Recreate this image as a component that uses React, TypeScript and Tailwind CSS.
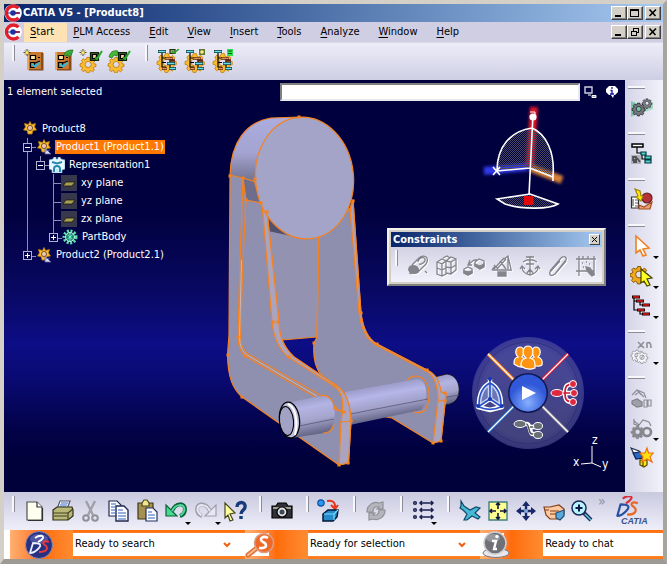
import type { ReactNode } from "react";

const FONT = "font-['DejaVu_Sans_Condensed','DejaVu_Sans',sans-serif]";

function AppLogo() {
  return (
    <svg viewBox="0 0 18 18" className="size-[18px] shrink-0" aria-hidden="true">
      <circle cx="9" cy="9" r="8.8" fill="#fff" />
      <path d="M14.5 4.2A7 7 0 1 0 14.5 13.8" fill="none" stroke="#e0202c" strokeWidth="3.4" />
      <path d="M8 9h8" stroke="#e0202c" strokeWidth="2" />
      <circle cx="9" cy="9" r="2.8" fill="#20309c" />
      <path d="M3 9h12" stroke="#20309c" strokeWidth="1" />
    </svg>
  );
}

function WinButton({ kind, label }: { kind: "min" | "max" | "restore" | "close"; label: string }) {
  return (
    <button
      aria-label={label}
      className={`flex h-3.5 w-4 items-center justify-center border border-t-white border-r-[#404040] border-b-[#404040] border-l-white bg-[#d4d0c8] shadow-[inset_-1px_-1px_0_#808080] ${kind === "close" ? "ml-0.5" : ""}`}
    >
      <svg viewBox="0 0 10 10" className="size-2.5" fill="none" stroke="#000" shapeRendering="crispEdges">
        {kind === "min" && <path d="M1 8h6" strokeWidth="2" />}
        {kind === "max" && <path d="M.5 1h8M.5 1v7.5h8V1M.5 2h8" />}
        {kind === "restore" && <path d="M3 1h5.500v4.500H6.500M3 1v2.500M3 1.500h5.500M1 4h5.500v4.500H1zM1 4.500h5.500" />}
        {kind === "close" && <path d="M1.500 1.500l6 6.500M8 1.500l-6.500 6.500" strokeWidth="1.600" shapeRendering="auto" />}
      </svg>
    </button>
  );
}

function WindowButtons({ second, name }: { second: "max" | "restore"; name: string }) {
  return (
    <div className="ml-auto flex pr-0.5">
      <WinButton kind="min" label={`Minimize ${name}`} />
      <WinButton kind={second} label={`Resize ${name}`} />
      <WinButton kind="close" label={`Close ${name}`} />
    </div>
  );
}

function Grip({ tall = true }: { tall?: boolean }) {
  return (
    <span
      className={
        tall
          ? "h-4 w-[3px] shrink-0 border-r border-[#8c8c98] bg-[#f8f8fc]"
          : "h-[3px] w-[17px] shrink-0 border-b border-[#8c8c98] bg-[#f8f8fc]"
      }
    />
  );
}

function Tool({ label, children, menu = false, wide = false }: { label: string; children: ReactNode; menu?: boolean; wide?: boolean }) {
  return (
    <button aria-label={label} className={`relative flex h-7 shrink-0 items-center justify-center ${wide ? "w-[30px]" : "w-7"}`}>
      <svg viewBox="0 0 24 24" className="size-6" fill="none" strokeWidth="1.2">
        {children}
      </svg>
      {menu && <span className="absolute right-0 bottom-0 border-x-[3px] border-t-[3px] border-x-transparent border-t-black" />}
    </button>
  );
}

const GEAR =
  "M10 2h4l.6 3 2 .9 2.700-1.700 2.500 2.700-1.600 2.600.7 1.800 2.600.7v3.500l-2.800.7-1 2 1.500 2.500-2.600 2.500-2.600-1.600-1.900.8-.7 2.500h-3.600l-.8-2.700-1.900-.9-2.600 1.600-2.400-2.600 1.500-2.500-.8-2-2.700-.7v-3.600l2.700-.7.900-1.900-1.500-2.500 2.500-2.500 2.500 1.500 2-.8zM12 8a4.500 4.500 0 1 0 0 9 4.500 4.500 0 0 0 0-9z";

function Gear({ x = 0, y = 0, s = 1, fill = "#f0b020", stroke = "#b87008" }: { x?: number; y?: number; s?: number; fill?: string; stroke?: string }) {
  return (
    <g transform={`translate(${x} ${y}) scale(${s})`}>
      <path d={GEAR} fill={fill} stroke={stroke} fillRule="evenodd" />
    </g>
  );
}

function Cabinet({ arrow = false }: { arrow?: boolean }) {
  return (
    <>
      <path d="M4 3h16v18H4z" fill="#c87830" />
      <path d="M4 3h2v18H4z" fill="#e8a860" />
      <path d="M18 4h2.500v17.500H6V20h12z" fill="#8c4c18" />
      <path d="M7.500 6.500h5v4h-5z" fill="#ffe8a0" stroke="#000" />
      <path d="M15 8.500h2M7.500 13.500h4v5h-4zM12 14l5-2" stroke="#000" />
      <path d="M9 15l3 2.500 5-4" stroke="#38b8d8" strokeWidth="2" />
      {arrow ? (
        <path d="M13 5c2-3 4-4 9-4-1 3-1 5-4 7l-1-2-3 1z" fill="#3ca838" stroke="#14701c" strokeWidth=".7" />
      ) : (
        <Spark />
      )}
    </>
  );
}

function Spark() {
  return (
    <>
      <path d="M4 0v7M.5 3.500h7M2 1.500l4 4M6 1.500l-4 4" stroke="#403000" strokeWidth=".9" />
      <circle cx="4" cy="3.500" r="1.600" fill="#ffee60" />
    </>
  );
}

function GearCheck({ arrow = false }: { arrow?: boolean }) {
  return (
    <>
      <Gear x={1} y={7} s={0.68} fill="#f8bc30" stroke="#c07808" />
      <path d="M11.500 3.500h8v8h-8z" fill="#385828" stroke="#102008" />
      <path d="M13.500 5.500h4v4h-4z" fill="#ffd8a0" stroke="#000" />
      <path d="M16 8l2 2 5-8" stroke="#28a830" strokeWidth="2" />
      {arrow ? <path d="M2 8C3 3 6 1 11 2l-1 5-3-1-2 3z" fill="#48b838" stroke="#187018" strokeWidth=".7" /> : <Spark />}
    </>
  );
}

function GearTree({ badge }: { badge: ReactNode }) {
  return (
    <>
      <Gear x={1} y={3} s={0.82} fill="#f8bc30" stroke="#d08c10" />
      <path d="M6 4v14h4M6 9h4M6 13.500h4M14 10v9" stroke="#000" />
      <path d="M2 2.500h8M11 14.500h8M13 19.500h7" stroke="#103840" strokeWidth="3" />
      <path d="M2.500 2.500H9.500M11.500 14.500h7M13.500 19.500h6" stroke="#68e0e8" strokeWidth="1.500" />
      <path d="M9 9.500h8M14 11.500h5M6 19.500h5" stroke="#602818" strokeWidth="2.400" />
      <path d="M9.500 9.500h7M6.500 19.500h4" stroke="#e09060" strokeWidth="1.200" />
      {badge}
    </>
  );
}

function TopToolbar() {
  return (
    <div className="flex h-[37px] items-start bg-linear-to-b from-[#ededf8] to-[#cfcfe4] pt-0.5 pl-2" role="toolbar" aria-label="Product tools">
      <Grip />
      <div className="ml-1.5 flex pt-0.5">
        <Tool label="New catalog"><Cabinet /></Tool>
        <Tool label="Open catalog"><Cabinet arrow /></Tool>
        <Tool label="New check"><GearCheck /></Tool>
        <Tool label="Open check"><GearCheck arrow /></Tool>
      </div>
      <div className="ml-3 flex">
        <Grip />
        <div className="ml-1.5 flex pt-0.5">
          <Tool label="Validate structure"><GearTree badge={<><path d="M14 .5h5v4h-5z" fill="#98a870" stroke="#203010" /><path d="M16 2l2 2 5-4" stroke="#30a030" strokeWidth="1.600" /></>} /></Tool>
          <Tool label="Structure options"><GearTree badge={<><path d="M15 0h6v6h-6z" fill="#607830" /><circle cx="18" cy="3" r="1.800" fill="#fff080" /></>} /></Tool>
          <Tool label="Structure list"><GearTree badge={<><path d="M15 0h6v7h-6z" fill="#30e050" /><path d="M16 2h4M16 4.500h4" stroke="#086018" /></>} /></Tool>
        </div>
      </div>
    </div>
  );
}

function MenuBar() {
  const items = ["Start", "PLM Access", "Edit", "View", "Insert", "Tools", "Analyze", "Window", "Help"];
  return (
    <nav className="flex h-[21px] items-center border-b border-[#dcdce8] bg-[#cfcee2]">
      <AppLogo />
      <div className="ml-0.5 flex">
        {items.map((item) => (
          <button key={item} className={`h-[19px] pr-[13px] pl-1.5 whitespace-nowrap ${item === "Start" ? "bg-[#ffe2b4]" : ""}`}>
            <span className="underline underline-offset-2">{item[0]}</span>
            {item.slice(1)}
          </button>
        ))}
      </div>
      <WindowButtons second="restore" name="document" />
    </nav>
  );
}

/* Specification tree */

function Expander({ open }: { open: boolean }) {
  return (
    <button aria-label={open ? "Collapse" : "Expand"} className="flex size-[9px] shrink-0 items-center justify-center border border-[#b0b0d0] bg-[#000048]">
      <svg viewBox="0 0 7 7" className="size-[7px]" stroke="#fff" shapeRendering="crispEdges">
        <path d={open ? "M1 3.500h5" : "M1 3.500h5M3.500 1v5"} />
      </svg>
    </button>
  );
}

function TreeIcon({ kind }: { kind: "root" | "product" | "rep" | "plane" | "body" }) {
  return (
    <svg viewBox="0 0 16 16" className="size-4 shrink-0" aria-hidden="true">
      {(kind === "root" || kind === "product") && (
        <>
          <path d="M8 .5l1.500 3 4-1-1 3.500 2 3-3.500.5L10 13H6l-1-3.500L1.500 9l2-3-1-3.500 4 1z" fill="#f8c030" stroke="#b87808" strokeWidth=".8" />
          <circle cx="8" cy="7" r="2.600" fill="#f0c0b0" stroke="#604010" strokeWidth=".8" />
        </>
      )}
      {kind === "product" && <path d="M9 9l6 6H9zM9 12l5-1" fill="#d8d8f8" stroke="#6060b0" strokeWidth=".8" />}
      {kind === "rep" && (
        <>
          <path d="M0 3l4-1 1-2h2v2h2V0h2l1 2 4 1v9l-3 1v3H3v-3l-3-1z" fill="#e8f8ff" stroke="#78b0d0" strokeWidth=".7" />
          <path d="M3 5l5 1.500L13 5M5 15v-3c0-4 6-4 6 0v3" fill="none" stroke="#2888b0" strokeWidth="2" />
          <path d="M6.500 12h3v4h-3z" fill="#b8e8f8" />
        </>
      )}
      {kind === "plane" && (
        <>
          <path d="M0 0h16v16H0z" fill="#38384c" />
          <path d="M5 7h9l-3 4H2z" fill="#a8a050" stroke="#181810" strokeWidth=".8" />
        </>
      )}
      {kind === "body" && (
        <>
          <circle cx="8" cy="8" r="6" fill="none" stroke="#60e0b0" strokeWidth="3" strokeDasharray="2 1.500" />
          <circle cx="8" cy="8" r="4.500" fill="#208070" stroke="#b0ffe0" />
          <path d="M8 4v8M5.500 6l5 4M10.500 6l-5 4" stroke="#70f0c0" />
        </>
      )}
    </svg>
  );
}

function SpecTree() {
  const rows: { text: string; pad: string; icon: "root" | "product" | "rep" | "plane" | "body"; open?: boolean; selected?: boolean }[] = [
    { text: "Product8", pad: "pl-0", icon: "root" },
    { text: "Product1 (Product1.1)", pad: "pl-0", icon: "product", open: true, selected: true },
    { text: "Representation1", pad: "pl-[13px]", icon: "rep", open: true },
    { text: "xy plane", pad: "pl-[39px]", icon: "plane" },
    { text: "yz plane", pad: "pl-[39px]", icon: "plane" },
    { text: "zx plane", pad: "pl-[39px]", icon: "plane" },
    { text: "PartBody", pad: "pl-[26px]", icon: "body", open: false },
    { text: "Product2 (Product2.1)", pad: "pl-0", icon: "product", open: false },
  ];
  return (
    <div className="relative mt-4 ml-[18px] w-max text-white">
      <svg viewBox="0 0 60 146" className="absolute top-0 left-0 h-[146px] w-[60px]" stroke="#8c8cb8" fill="none" shapeRendering="crispEdges">
        <path d="M5.500 18v118M9 27.500h5M9 136.500h5M18.500 36v5M22 45.500h5M31.500 54v60M31.500 63.500h8M31.500 82.500h8M31.500 100.500h8M35 118.500h5" />
      </svg>
      <ul className="relative">
        {rows.map((r) => (
          <li key={r.text} className={`flex h-[18px] items-center ${r.pad}`}>
            {r.open !== undefined && <span className="mr-1 flex pl-px"><Expander open={r.open} /></span>}
            <TreeIcon kind={r.icon} />
            <span className={`ml-[3px] px-px leading-[14px] whitespace-nowrap ${r.selected ? "bg-[#ff7800]" : ""}`}>{r.text}</span>
          </li>
        ))}
      </ul>
    </div>
  );
}

/* 3D part shown in the canvas */

function Model() {
  return (
    <svg viewBox="0 0 250 370" className="absolute top-[30px] left-[216px] h-[370px] w-[250px]" role="img" aria-label="Bracket with pin">
      <defs>
        <linearGradient id="rim" x1="0" y1="0" x2="0" y2="1">
          <stop offset="0" stopColor="#acacde" />
          <stop offset=".55" stopColor="#a4a4d2" />
          <stop offset="1" stopColor="#70708e" />
        </linearGradient>
        <linearGradient id="pin" x1="0" y1="0" x2=".2" y2="1">
          <stop offset="0" stopColor="#8c8cb4" />
          <stop offset=".35" stopColor="#b4b4e4" />
          <stop offset=".65" stopColor="#a4a4cc" />
          <stop offset="1" stopColor="#606080" />
        </linearGradient>
        <linearGradient id="pinLong" gradientUnits="userSpaceOnUse" x1="380" y1="381" x2="387" y2="420">
          <stop offset="0" stopColor="#9090bc" />
          <stop offset=".35" stopColor="#b6b6e8" />
          <stop offset=".65" stopColor="#a0a0c8" />
          <stop offset="1" stopColor="#5c5c7c" />
        </linearGradient>
      </defs>
      <g transform="translate(-220 -110)" stroke="#f58220" strokeWidth="1.200" strokeLinejoin="round">
        {/* rear web between the arms */}
        <path d="M265 205L319 232L317 337L282 340L274 318Z" fill="#9393b1" stroke="none" />
        <path d="M317 337L282 340" />
        <path d="M267 213L296 237L268 231Z" fill="#52526c" stroke="none" />
        {/* pin, far end */}
        <path d="M430 378L447 374C456 375 460 384 459 392C458 400 454 404 445 405L436 407Z" fill="url(#pin)" stroke="#101020" strokeWidth=".8" />
        <path d="M437 399L459 395" stroke="#505070" strokeWidth=".8" />
        {/* right arm */}
        <path d="M353 200L361 313C363 329 368 339 377 344L427 370C438 376 440 386 441 392L446 394L441 441L433 443L392 418L345 410L321 375C314 366 313 355 314 343L317 337L319 236L350 208Z" fill="#8e8eae" />
        <path d="M350 210L359 312C361 329 367 340 376 345L426 371C435 376 438 386 438 400L433 443L441 441L446 394L441 392C440 382 436 374 427 370L377 344C368 339 363 329 361 313L353 200Z" fill="#a9a3bf" />
        <path d="M317 337L318.500 236M438 401L445 400" />
        {/* pin, middle */}
        <path d="M345 392L417 379C427 378 430 400 421 410L345 426Z" fill="url(#pinLong)" stroke="none" />
        <path d="M345 415L428 399" stroke="#58587a" strokeWidth=".8" />
        <path d="M407 381C411 374 421 375 425 381C431 389 430 402 425 410C422 413 418 413 414 412" fill="none" />
        {/* left arm */}
        <path d="M230 175L229 335L227.500 355C228 378 233 389 242 397L339 465L348.500 463L351 421C350 402 346 393 337 386L294 357C283 347 279 335 279 322L267 212L254 178Z" fill="#8f8faf" />
        <path d="M262 203L272 322C274 340 280 350 288 357L334 386C342 392 345 401 341 422L339 465L348.500 463L351 421C350 402 346 393 337 386L294 357C283 347 279 335 279 322L267 212Z" fill="#aaa4c0" />
        <path d="M243 178L240 260L238 337C238 347 240 352 245 356L315 397M243 178L246 200L243 260L240.500 337C241 346 243 350 248 354L320 395" fill="none" />
        <path d="M241.500 260L239.500 337C240 347 242 351 247 355L317 396" fill="none" stroke="#e8c8b0" strokeWidth=".7" />
        <path d="M341 422L351 421M334 407L344 413M335 410L345 412" />
        {/* head */}
        <path d="M243 178L254 180L261 203L246 200Z" fill="#6e6e8c" />
        <path d="M230 175C231 142 246 122 271 118L300 117L256 182L243 178Z" fill="url(#rim)" />
        <ellipse cx="304.500" cy="178" rx="49" ry="61" transform="rotate(-6 304.500 178)" fill="#a4a4c8" />
        {/* pin, near end */}
        <path d="M291 402L325 395C334 400 338 414 332 427C330 431 328 432 324 433L292 438Z" fill="url(#pin)" stroke="none" />
        <path d="M294 427L334 419" stroke="#58587a" strokeWidth=".8" />
        <path d="M320 396C329 393 334 402 334.500 408M334 424C332 432 328 433 323 433" fill="none" />
        <ellipse cx="289.500" cy="420" rx="10" ry="18" transform="rotate(-6 289.500 420)" fill="#c0c0dc" stroke="#000" strokeWidth="1.300" />
        <path d="M288 404C296 407 298 423 295 435" fill="none" stroke="#fff" strokeWidth="2" />
        <ellipse cx="286.500" cy="421" rx="7" ry="14.500" transform="rotate(-6 286.500 421)" fill="#a2a2c6" stroke="#000" strokeWidth="1.100" />
        {/* vertex handles */}
        <path d="M230 176h.1M243 178h.1M255 179h.1M261 203h.1M267 212h.1M246 200h.1M350 210h.1M353 201h.1M238 337h.1M228 355h.1M245 356h.1M242 397h.1M273 322h.1M278 322h.1M289 357h.1M335 386h.1M361 313h.1M377 344h.1M427 370h.1M445 393h.1M445 401h.1M441 441h.1M433 443h.1M339 465h.1M348 463h.1M351 421h.1M344 412h.1M335 408h.1M314 343h.1M299 117h.1" strokeWidth="3" strokeLinecap="square" />
      </g>
    </svg>
  );
}

function OrientationCompass() {
  return (
    <svg viewBox="0 0 88 108" className="absolute top-6 right-[57px] h-[108px] w-[88px]" role="img" aria-label="Compass">
      <defs>
        <filter id="glow" x="-50%" y="-50%" width="200%" height="200%"><feGaussianBlur stdDeviation="1.800" /></filter>
        <pattern id="mesh" width="2" height="2" patternUnits="userSpaceOnUse"><path d="M0 0h1v1H0zM1 1h1v1H1z" fill="#484860" /></pattern>
      </defs>
      <g filter="url(#glow)" strokeWidth="8">
        <path d="M54 3L50 62" stroke="#e01828" />
        <path d="M4 67L47 63" stroke="#3038e8" />
        <path d="M51 64L82 76" stroke="#d88038" />
      </g>
      <path d="M16 67C16 42 30 27 52 24C66 30 75 48 73 73L49 64Z" fill="url(#mesh)" />
      <g fill="none" stroke="#fff" strokeWidth="1.600">
        <path d="M17 67C17 42 31 27 52 24C66 30 75 48 73 72M13 63l7 8M20 63l-7 8M17 67l33-3 23 9M73 70v7M53 10L49 91" />
        <path d="M17 95L50 90L78 100C70 105 43 106 25 100Z" fill="url(#mesh)" />
      </g>
      <path d="M50 8h5v4" fill="none" stroke="#fff" />
      <circle cx="53" cy="13" r="3.600" fill="#fff" />
      <path d="M44 92h9v9h-9z" fill="#e00808" />
    </svg>
  );
}

function CommandWheel() {
  return (
    <svg viewBox="0 0 114 114" className="absolute top-[256px] right-10 size-[114px]" role="img" aria-label="Command wheel">
      <defs>
        <radialGradient id="wheel">
          <stop offset=".3" stopColor="#8080b4" stopOpacity=".5" />
          <stop offset=".8" stopColor="#7878ac" stopOpacity=".55" />
          <stop offset="1" stopColor="#5454a0" stopOpacity=".6" />
        </radialGradient>
        <radialGradient id="hub" cy=".75">
          <stop offset="0" stopColor="#88b0ff" />
          <stop offset="1" stopColor="#3058d8" />
        </radialGradient>
      </defs>
      <circle cx="57" cy="57" r="56" fill="url(#wheel)" />
      <circle cx="57" cy="57" r="51" fill="none" stroke="#20205c" strokeOpacity=".4" />
      <path d="M17 18L43 44" stroke="#f07818" strokeWidth="3.400" />
      <path d="M97 18L71 44" stroke="#d81838" strokeWidth="3.400" />
      <path d="M17 96L43 70" stroke="#2060b8" strokeWidth="3.400" />
      <path d="M97 96L71 70" stroke="#888890" strokeWidth="3" />
      <path d="M17 18L43 44M97 18L71 44M17 96L43 70M97 96L71 70" stroke="#fff" strokeWidth="1.300" />
      <circle cx="57" cy="57" r="20" fill="#101850" />
      <circle cx="57" cy="57" r="18.500" fill="url(#hub)" />
      <path d="M51 50l14 7-14 7z" fill="#fff" />
      <g fill="#ff9410" stroke="#fff" strokeWidth="1.200">
        <path d="M43 28c0-5 1-6 4-7-4-4-2-10 2-10s5 6 2 10c2 1 3 2 3 6v3c-3 2-7 1-11-2zM60 28c0-5 1-6 3-7-3-4-2-10 2-10s6 6 2 10c3 1 5 3 4 8-3 2-6 2-11-1z" />
        <path d="M50 30c0-5 1-7 5-8-5-4-3-12 2-12s7 8 2 12c4 1 5 3 5 8v2c-5 2-9 2-14-2z" />
      </g>
      <g fill="none" stroke="#fff" strokeWidth="4.500">
        <path d="M87 57h15M94 57c0-7 2-9 8-9M94 57c0 7 2 9 8 9" />
        <path d="M49 88h7c4 0 2 10 6 10h6M60 91h7" />
      </g>
      <g fill="none" stroke="#d01830" strokeWidth="1.700">
        <path d="M88 57h14M94 57c0-7 2-9 8-9M94 57c0 7 2 9 8 9" />
      </g>
      <g fill="#e02840" stroke="#fff">
        <ellipse cx="86" cy="57" rx="6" ry="3.500" /><circle cx="102" cy="48" r="3.500" /><circle cx="103" cy="57" r="3.500" /><circle cx="102" cy="66" r="3.500" />
      </g>
      <path d="M48 88h7c4 0 2 10 6 10h6M59 91h7" stroke="#50585c" strokeWidth="1.500" fill="none" />
      <g fill="#687074" stroke="#fff">
        <ellipse cx="49" cy="88" rx="6" ry="3.500" /><ellipse cx="67" cy="90" rx="4.500" ry="3.500" /><ellipse cx="67" cy="99" rx="4.500" ry="3.500" />
      </g>
      <path d="M19 43v20L7 71l12 3 12-3-12-8M19 47C11 51 8 59 8 69M19 47c8 4 11 12 11 22" fill="none" stroke="#fff" strokeWidth="4.500" strokeLinejoin="round" />
      <path d="M19 47C11 51 8 59 8 69L19 63L30 69C30 59 27 51 19 47Z" fill="#90a8e0" fillOpacity=".5" />
      <path d="M19 43v20L7 71M19 63l12 8M19 47C11 51 8 59 8 69M19 47c8 4 11 12 11 22M8 71c7 3 15 3 22 0" fill="none" stroke="#2850c8" strokeWidth="1.600" />
      <g fill="#1838b0"><circle cx="19" cy="43" r="2" /><circle cx="7" cy="70" r="2" /><circle cx="31" cy="70" r="2" /><circle cx="19" cy="63" r="2" /></g>
    </svg>
  );
}

function AxisTriad() {
  return (
    <svg viewBox="0 0 38 48" className="absolute top-[350px] right-[14px] h-12 w-[38px]" role="img" aria-label="Axis system">
      <path d="M19 33V16M19 33L8 34M19 33l9 4" stroke="#fff" fill="none" />
      <g fill="#fff" fontSize="12" fontFamily="DejaVu Sans Condensed, sans-serif">
        <text x="19" y="14">z</text><text x="0" y="36">x</text><text x="29" y="38">y</text>
      </g>
    </svg>
  );
}

function GreyTool({ label, d, fill }: { label: string; d: string; fill?: string }) {
  return (
    <Tool label={label}>
      <g transform="translate(1 1)" stroke="#fff"><path d={d} />{fill && <path d={fill} fill="#fff" />}</g>
      <g stroke="#84848c" strokeWidth="1.300"><path d={d} />{fill && <path d={fill} fill="#84848c" />}</g>
    </Tool>
  );
}

function ConstraintsPalette() {
  return (
    <section aria-label="Constraints" className="absolute top-[148px] right-[19px] w-[219px] border-2 border-t-[#f4f2ec] border-r-[#84827c] border-b-[#84827c] border-l-[#f4f2ec] bg-[#d4d0c8] p-0.5">
      <header className="flex h-[15px] items-center justify-between bg-linear-to-r from-[#0a246a] to-[#a6caf0] px-0.5">
        <h2 className="font-bold text-white">Constraints</h2>
        <button aria-label="Close Constraints" className="flex size-[11px] items-center justify-center border border-t-white border-r-[#404040] border-b-[#404040] border-l-white bg-[#d4d0c8]">
          <svg viewBox="0 0 7 7" className="size-[7px]" stroke="#000"><path d="M1 1l5 5M6 1L1 6" /></svg>
        </button>
      </header>
      <div className="flex h-[35px] bg-linear-to-b from-[#d2d2e4] to-[#f2f2fc] pt-[3px] pl-1">
        <Grip />
        <div className="ml-1.5 flex pt-0.5">
          <GreyTool label="Coincidence" d="M6 11L13 4c3-3 7-2 8 0s0 6-3 8l-6 6M12 8c0-4 6-6 7-3s-4 6-6 5M19 17l2 2M3 19l3 1" fill="M3 14c1-3 6-3 8-1s2 5 0 6-6 0-7-1-2-2-1-4z" />
          <GreyTool label="Contact" d="M3 8l5-3 4 2v13l-4 2-5-2zM3 8l5 2v12M8 10l4-3M12 7l5-4 5 2v11l-5 4-5-1M12 7l5 1v12M17 8l5-3M3 14l5 2 4-2M12 13l5 1 5-3M9 4l4-2 3 2" />
          <GreyTool label="Offset" d="M7 10l5-4M8 6l-2 5 4 0M12 6h3M2 15l4-2 4 2v4l-4 2-4-2zM13 8l4-3 5 2v5l-4 3-5-3z" fill="M2 17l4 1 4-1v2l-4 2-4-2zM13 10l5 2 4-2v3l-4 2-5-3z" />
          <GreyTool label="Angle" d="M2 16h20M4 15L14 4M7 15l9-10M4 11l3 3M10 7l6 8M18 3v12M14 5l4-3 3 13M2 16l3-4" fill="M8 18h8v4H8z" />
          <GreyTool label="Fix" d="M12 2v18M8 3h8M5 8l4-2h6l4 2M8 10h8M4 13c0 5 4 7 8 8 4-1 8-3 8-8M2 15l2-3 3 3M17 15l3-3 2 3M9 19l3-4 3 4" />
          <GreyTool label="Fix together" d="M4 17L15 4c4-3 6 0 5 2L9 20c-4 3-6 1-5-2L14 7M9 20l11-13" />
          <GreyTool label="Quick constraint" d="M2 5h20M5 2v20M2 17h18M20 2v20M9 2v3M14 2v3M8 9h1M12 8h1M15 10h1M9 13h1" fill="M12 13l4 1 4 6-2 2-5-5z" />
        </div>
      </div>
    </section>
  );
}

function Viewport() {
  return (
    <main className="relative min-h-[411px] min-w-0 flex-1 overflow-hidden bg-[linear-gradient(to_bottom,#00003e_0%,#00003e_32%,#080860_50%,#0d0d86_64%,#0a0a74_72%,#020248_85%,#00003a_92%)]">
      <div className="relative z-10 flex h-6 items-center pr-1.5 pl-[3px] text-white">
        <label htmlFor="power" className="flex-1 whitespace-nowrap">1 element selected</label>
        <input id="power" className="h-[18px] w-[300px] border-2 border-t-[#808080] border-r-[#e8e8f0] border-b-[#e8e8f0] border-l-[#808080] bg-white px-1 text-black outline-none" />
        <svg viewBox="0 0 14 14" className="ml-1 size-3.5" aria-hidden="true">
          <path d="M1 2h7v6H1z" fill="#000040" stroke="#d0d0e0" strokeWidth="1.400" /><path d="M4 10h3M8 10.500h4v2H8z" stroke="#fff" fill="#a0a0b0" />
        </svg>
        <svg viewBox="0 0 14 14" className="ml-[7px] size-3.5" aria-hidden="true">
          <path d="M4 1h6l3 3v3l-3 3H9l-1 3-2-3H4L1 7V4z" fill="#fff" /><path d="M7 2v2M7 5v4M5.500 5.500H7M5 9h4" stroke="#1010a0" strokeWidth="1.300" />
        </svg>
      </div>
      <Model />
      <SpecTree />
      <OrientationCompass />
      <CommandWheel />
      <AxisTriad />
      <ConstraintsPalette />
    </main>
  );
}

function RailTool({ label, menu = false, children }: { label: string; menu?: boolean; children: ReactNode }) {
  return (
    <button aria-label={label} className="relative flex h-[30px] w-[34px] items-center justify-center">
      <svg viewBox="0 0 24 24" className="size-6" fill="none" strokeWidth="1.200">{children}</svg>
      {menu && <span className="absolute right-0 bottom-0.5 border-x-[3px] border-t-[3px] border-x-transparent border-t-black" />}
    </button>
  );
}

function RailGroup({ children }: { children: ReactNode }) {
  return (
    <div className="flex flex-col pt-1.5 pb-[3px]">
      <div className="mb-1 flex pl-[3px]"><Grip tall={false} /></div>
      {children}
    </div>
  );
}

function Rail() {
  return (
    <aside className="w-[38px] shrink-0 bg-linear-to-r from-[#d4d4e8] to-[#f2f2fa]">
      <RailGroup>
        <RailTool label="Assembly workbench">
          <path d="M1 5l16 7L1 21z" fill="#78c8b0" /><path d="M12 12l11-6v7l-11 4z" fill="#a8d8c8" />
          <Gear x={2} y={6} s={0.56} fill="#787880" stroke="#101010" /><Gear x={12} y={2} s={0.42} fill="#808088" stroke="#101010" />
        </RailTool>
      </RailGroup>
      <RailGroup>
        <RailTool label="Structure">
          <path d="M7 5v6h5M12 11v6h4" stroke="#000" /><path d="M2 2h11v3H2z" fill="#fff" stroke="#000" strokeWidth="1.500" />
          <path d="M11 10h5v3h-5zM15 14h6v3h-6zM15 18h6v3h-6z" fill="#50d0d0" stroke="#003838" />
          <path d="M1 13h10v9H1z" fill="#b4b4b8" /><path d="M3 15h3v3H3zM7 16l3 4M3 20h4" stroke="#505058" strokeWidth="1.800" />
        </RailTool>
      </RailGroup>
      <RailGroup>
        <RailTool label="Reuse pattern">
          <path d="M1.500 9h7v11h-7z" fill="#fff" stroke="#303030" /><path d="M3 11v7M5 12h3M5 15h3M5 18h3" stroke="#606060" />
          <circle cx="17" cy="10" r="5" fill="#b83038" stroke="#602028" /><path d="M9 17l5 2 8-5-2 7H9z" fill="#f0a070" stroke="#a05020" />
          <path d="M5 1l5 2 1 5h2l-2 5-5-4 2-1z" fill="#ffe818" stroke="#a08800" />
        </RailTool>
      </RailGroup>
      <RailGroup>
        <RailTool label="Select" menu><path d="M6 2v17l4-3 3 6 3-1-3-6 6-1z" fill="#fff" stroke="#f08020" strokeWidth="1.600" /></RailTool>
        <RailTool label="Select component" menu><Gear x={0} y={1} s={0.76} fill="#f0a818" stroke="#805000" /><path d="M11 5v14l3-2 3 5 3-1-3-6 5-1z" fill="#ffff20" stroke="#404000" /></RailTool>
        <RailTool label="Tree selection" menu>
          <path d="M4 3v13h4M4 7h6M10 7v4h3M10 16v4h3" stroke="#000" /><path d="M2 3h8M6 7h8M12 11h8M7 16h8M12 20h8" stroke="#200000" strokeWidth="3" /><path d="M3 3h6M7 7h6M13 11h6M8 16h6M13 20h6" stroke="#e01818" strokeWidth="1.600" />
        </RailTool>
      </RailGroup>
      <RailGroup>
        <RailTool label="Multi instance" menu>
          <path d="M8 2l6 6M14 2L8 8M17 8V3c3-1 4 0 4 5" stroke="#909098" strokeWidth="1.600" />
          <Gear x={1} y={9} s={0.5} fill="#f8f8fc" stroke="#707078" /><Gear x={6} y={11} s={0.5} fill="#f8f8fc" stroke="#707078" />
        </RailTool>
      </RailGroup>
      <RailGroup>
        <RailTool label="Manipulation">
          <path d="M2 9l5-5 7 3 2 5M5 9l4-3 5 5M7 4l4 5M14 14h3v7h-3zM18 14h3v6h-3z" stroke="#909098" /><path d="M2 15l5-2 5 3v4l-5 1-5-3z" fill="#a0a0a8" stroke="#808088" />
        </RailTool>
        <RailTool label="Snap" menu>
          <Gear x={1} y={9} s={0.55} fill="#88888e" stroke="#88888e" /><circle cx="17" cy="16" r="4" stroke="#85858c" strokeWidth="2.600" /><path d="M4 5l5 4 4-5 6 2 2 4M4 3v5l5 2" stroke="#88888e" />
        </RailTool>
        <RailTool label="Smart move">
          <path d="M1 2l8 3 3 5-6 2z" fill="#fff" stroke="#203050" /><path d="M3 7l7-1 3 6-7 1z" fill="#2868c8" stroke="#102048" />
          <path d="M10 14h7v5l-3 2-4-2zM13 14v7" fill="#ffe818" stroke="#504800" />
          <path d="M17 2l1.500 5 4.500 0-3 4 2 5-5-3-5 3 1-5-3-4h5z" fill="#ffe010" stroke="#f07010" />
        </RailTool>
      </RailGroup>
    </aside>
  );
}

function Group({ children }: { children: ReactNode }) {
  return (
    <div className="flex items-start pl-2">
      <Grip />
      <div className="ml-1.5 flex pt-px pr-0.5">{children}</div>
    </div>
  );
}

function DassaultMark({ light = false }: { light?: boolean }) {
  return (
    <g fill="none" strokeWidth={light ? 1.8 : 2} strokeLinejoin="round">
      <path d="M9 4c4-3 9-3 8 0-1 2-3 3-5 4" stroke={light ? "#fff" : "#d83040"} />
      <path d="M4 19L7 9c8 0 9 2 5 6-2 2-5 4-8 4z" stroke={light ? "#e8f0ff" : "#2850a0"} />
      <path d="M23 8c-5-2-8 1-4 3 4 3 2 7-6 7" stroke={light ? "#f03838" : "#e86828"} />
    </g>
  );
}

function BottomToolbar() {
  return (
    <div className="flex h-[38px] items-start bg-linear-to-b from-[#c9c9df] to-[#efeffa] pt-1" role="toolbar" aria-label="Standard tools">
      <Group>
        <Tool label="New"><path d="M4 3h10l5 5v13H4z" fill="#fffff0" stroke="#505050" /><path d="M14 3v5h5" fill="#fff" stroke="#303030" /><path d="M5 21.500h14.500V9" stroke="#303030" /></Tool>
        <Tool label="Print">
          <path d="M9 2h10l-3 8H6z" fill="#fff" stroke="#505868" /><path d="M10 4h7M9 6h7M8 8h7" stroke="#3868d0" />
          <path d="M2 11l4-3h15l1 3v6l-5 4H2z" fill="#b8b878" stroke="#303018" /><path d="M2 14h15l5-4M17 14v7M3 17h13" stroke="#404020" />
        </Tool>
        <Tool label="Cut"><path d="M7 2l7 14M16 2L9 16" stroke="#a0a0a8" strokeWidth="2.400" /><circle cx="7" cy="19" r="2.800" stroke="#909098" strokeWidth="2" /><circle cx="16" cy="19" r="2.800" stroke="#909098" strokeWidth="2" /></Tool>
        <Tool label="Copy"><path d="M2 2h8l4 4v11H2z" fill="#fff" stroke="#202850" /><path d="M9 7h8l4 4v11H9z" fill="#fff" stroke="#202850" strokeWidth="1.400" /><path d="M4 5h5M4 8h4M4 11h4M4 14h4M11 11h5M11 14h8M11 17h8M11 20h8" stroke="#3060c0" /></Tool>
        <Tool label="Paste"><path d="M3 4h15v16H3z" fill="#a49050" stroke="#403818" /><path d="M7 4l2-3h3l2 3v3H7z" fill="#f0e890" stroke="#504818" /><path d="M11 9h7l4 4v9H11z" fill="#fff" stroke="#203060" /><path d="M13 13h4M13 16h7M13 19h7" stroke="#3060c0" /></Tool>
        <Tool label="Undo" menu wide><path d="M8 12C12 3 21 4 21 10c0 3-2 6-5 7" stroke="#086038" strokeWidth="4" /><path d="M2 6v11h11z" fill="#48d890" stroke="#086038" /><path d="M8 12C12 4 20 5 20.500 10c0 3-2 5-4 6.500" stroke="#50d898" strokeWidth="2" /></Tool>
        <Tool label="Redo" menu wide><path d="M16 12C12 3 3 4 3 10c0 3 2 6 5 7" stroke="#a0a0ac" strokeWidth="4" /><path d="M22 6v11H11z" fill="#e8e8f4" stroke="#a0a0ac" /><path d="M16 12C12 4 4 5 3.500 10c0 3 2 5 4 6.500" stroke="#e8e8f4" strokeWidth="2" /></Tool>
        <Tool label="What's this?"><path d="M2 4v15l3-3 2 6 3-1-3-6 5-1z" fill="#ffffa0" stroke="#484820" /><path d="M14 8c0-6 9-6 8 0 0 3-4 3-4 7M18 17v3" stroke="#183c78" strokeWidth="3.400" /></Tool>
      </Group>
      <Group><Tool label="Capture"><path d="M2 7h4l2-3h8l2 3h4v12H2z" fill="#303038" stroke="#000" /><path d="M3 9h18" stroke="#e8e8c8" /><circle cx="12" cy="13" r="5" fill="#e0e0e0" stroke="#000" /><circle cx="12" cy="13" r="2.500" fill="#384858" /></Tool></Group>
      <Group><Tool label="Apply material"><circle cx="4" cy="4" r="3.200" fill="#2898f0" stroke="#1050a0" /><path d="M10 2c7-1 8 2 8 6M14 6l4 4 3-4" stroke="#e83018" strokeWidth="2" /><path d="M6 15l5-4h10l-1 7-4 4H6z" fill="#2888c8" stroke="#001838" strokeWidth="1.500" /><path d="M7 15h10l4-4M17 15v6" stroke="#70e0ff" /></Tool></Group>
      <Group><Tool label="Update"><path d="M3 13C3 6 9 2 15 4l4-1 0 7h-6l2-2c-4-1-6 1-6 5zM21 11c0 7-6 11-12 9l-4 1v-7h6l-2 2c4 1 6-1 6-5z" fill="#b4b4bc" stroke="#909098" /></Tool></Group>
      <Group><Tool label="Grid" menu><g stroke="#182050" strokeWidth="1.500"><path d="M9 4h13M9 11h13M9 18h13M11 2L9 4l2 2M20 2l2 2-2 2M11 9l-2 2 2 2M20 9l2 2-2 2M11 16l-2 2 2 2M20 16l2 2-2 2" /><circle cx="4" cy="4" r="1.300" /><circle cx="4" cy="11" r="1.300" /><circle cx="4" cy="18" r="1.300" /></g></Tool></Group>
      <Group>
        <Tool label="Fly mode"><path d="M3 2l3 5 6 4 6-3 4 1-5 5 5 4-2 2-6-3-5 4H6l3-6-4-4-3-2 1-2z" fill="#48b8d8" stroke="#104868" /></Tool>
        <Tool label="Fit all in"><path d="M3 3h18v18H3z" fill="#ffff90" stroke="#408080" strokeWidth="1.400" /><path d="M12 4v6M12 14v6M4 12h6M14 12h6M10 6l2-2 2 2M10 18l2 2 2-2M6 10l-2 2 2 2M18 10l2 2-2 2" stroke="#101840" strokeWidth="1.600" /></Tool>
        <Tool label="Pan"><path d="M12 4v16M4 12h16" stroke="#182868" strokeWidth="2.400" /><path d="M8 7l4-5 4 5zM8 17l4 5 4-5zM7 8l-5 4 5 4zM17 8l5 4-5 4z" fill="#182868" /><circle cx="12" cy="12" r="2" fill="#80a8d8" /></Tool>
        <Tool label="Rotate"><path d="M2 8h6l9-2 5 4v5l-4 5H8l-4-4z" fill="#ffc8a0" stroke="#804018" /><path d="M8 12h9M8 15h6M3 11h4" stroke="#804018" /><path d="M14 14l8-3v6l-4 4-4-2z" fill="#58a8d8" stroke="#205078" /></Tool>
        <Tool label="Zoom in"><path d="M14 14l7 7" stroke="#203058" strokeWidth="4" /><path d="M15 15l6 6" stroke="#60c0e0" strokeWidth="1.500" /><circle cx="9" cy="9" r="7" fill="#b8f4ff" stroke="#182858" strokeWidth="1.500" /><path d="M5.500 9h7M9 5.500v7" stroke="#101848" strokeWidth="2" /></Tool>
      </Group>
      <button aria-label="More tools" className="text-[14px] leading-[10px] text-[#9090a0]">»</button>
      <svg viewBox="0 0 44 32" className="mr-1.5 ml-auto h-8 w-11 shrink-0" role="img" aria-label="Dassault Systèmes CATIA">
        <g transform="translate(0 -2) scale(1.080 1.150)"><DassaultMark /></g>
        <text x="8" y="28" fontSize="9" fontWeight="bold" fontStyle="italic" fill="#3c5488" fontFamily="Liberation Sans, sans-serif">CATIA</text>
      </svg>
    </div>
  );
}

function StatusCell({ icon, text, id, label, arrow = true }: { icon: ReactNode; text: string; id: string; label: string; arrow?: boolean }) {
  return (
    <div className="flex min-w-0 items-stretch">
      <label htmlFor={id} aria-label={label} className="relative flex w-[63px] shrink-0 items-center bg-linear-to-r from-[#ffb070] via-[#ff6c08] to-[#ff8c30]">
        {icon}
      </label>
      <div className="relative my-[3px] min-w-0 flex-1 bg-white">
        <select id={id} aria-label={label} className="h-[22px] w-full appearance-none bg-transparent pl-0.5 text-black outline-none"><option>{text}</option></select>
        {arrow && <svg viewBox="0 0 8 8" className="pointer-events-none absolute top-2 right-3.5 size-2" fill="none" stroke="#f06010" strokeWidth="2"><path d="M1 2l3 3 3-3" /></svg>}
      </div>
    </div>
  );
}

function StatusBar() {
  return (
    <footer className="bg-white pl-1.5">
      <div className="grid h-[29px] grid-cols-[minmax(0,9fr)_minmax(0,9fr)_minmax(0,7fr)] rounded-l bg-linear-to-b from-[#ff6c00] via-[#ffa860] to-[#ff7810]">
        <StatusCell id="search" label="Search" text="Ready to search" icon={
          <svg viewBox="0 0 30 28" className="ml-3.5 h-7 w-[30px]"><circle cx="15" cy="14" r="13.500" fill="#283080" stroke="#8888b0" /><ellipse cx="15" cy="8" rx="9" ry="5" fill="#6870b8" opacity=".6" /><g transform="translate(2 3)"><DassaultMark light /></g></svg>
        } />
        <StatusCell id="selection" label="Selection" text="Ready for selection" icon={
          <><span className="absolute inset-y-[3px] left-0 w-6 bg-white" /><svg viewBox="0 0 30 28" className="relative h-7 w-[30px]"><path d="M12 17L3 24" stroke="#e07038" strokeWidth="5" strokeLinecap="round" /><path d="M12 17L3 24" stroke="#ffb888" strokeWidth="2" strokeLinecap="round" /><circle cx="19" cy="12" r="9.500" fill="#f06828" stroke="#d8a088" strokeWidth="1.500" /><path d="M23 7c-5-3-10 1-5 4 5 2 4 7-4 6" stroke="#fff" strokeWidth="2.600" fill="none" /></svg></>
        } />
        <StatusCell id="chat" label="Chat" text="Ready to chat" arrow={false} icon={
          <><span className="absolute inset-y-[3px] left-0 w-6 bg-white" /><svg viewBox="0 0 30 28" className="relative h-7 w-[30px]"><ellipse cx="16" cy="22" rx="13" ry="4.500" fill="#e8e8ec" stroke="#787880" /><circle cx="15" cy="12" r="11" fill="#707078" stroke="#d0d0d4" strokeWidth="1.500" /><ellipse cx="13" cy="7" rx="7" ry="4" fill="#b0b0b8" opacity=".6" /><path d="M17 5.500v.1" stroke="#fff" strokeWidth="3.500" strokeLinecap="round" /><path d="M12 10h4l-2 8h3" stroke="#fff" strokeWidth="2.400" fill="none" /></svg></>
        } />
      </div>
    </footer>
  );
}

export default function App() {
  return (
    <div className={`flex min-h-screen flex-col border-x-4 border-t-4 border-b-[5px] border-t-[#d4d0c8] border-r-[#a8a5a0] border-b-[#9c9a94] border-l-[#d4d0c8] bg-[#d4d0c8] text-[11px] leading-[14px] text-black ${FONT}`}>
      <header className="flex h-[18px] items-center bg-linear-to-r from-[#0a246a] to-[#a6caf0]">
        <AppLogo />
        <h1 className="ml-px font-bold whitespace-nowrap text-white">CATIA V5 - [Product8]</h1>
        <WindowButtons second="max" name="application" />
      </header>
      <MenuBar />
      <TopToolbar />
      <div className="flex flex-1">
        <Viewport />
        <Rail />
      </div>
      <BottomToolbar />
      <StatusBar />
    </div>
  );
}
